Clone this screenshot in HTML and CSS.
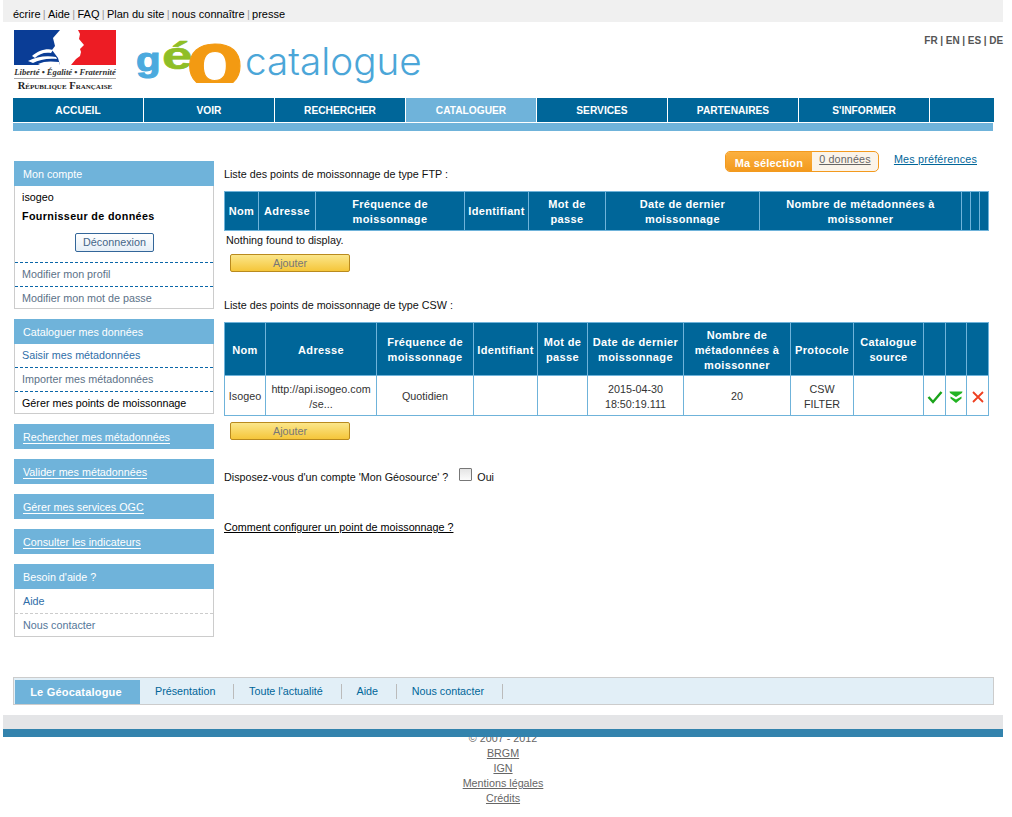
FILE: index.html
```html
<!DOCTYPE html>
<html lang="fr">
<head>
<meta charset="utf-8">
<title>Géocatalogue</title>
<link rel="stylesheet" href="styles.css">
</head>
<body>
<div class="page">
  <div class="util"><a>écrire</a><i>|</i><a>Aide</a><i>|</i><a>FAQ</a><i>|</i><a>Plan du site</a><i>|</i><a>nous connaître</a><i>|</i><a>presse</a></div>
  <header class="head">
    <div class="rf">
      <svg class="rf-flag" viewBox="0 0 102 35" width="102" height="35">
        <rect width="102" height="35" fill="#fff"/>
        <path d="M0 0H46L39 8 41 16 38 20 44 28 46 35H0Z" fill="#0a3d96"/>
        <path d="M64 0H102V35H57L62 29 66 26 67 22 66 19 70 15 65 9 66 4Z" fill="#ed1c24"/>
        <path d="M18 26C24 21 32 18 39 20L37 23C30 22 25 24 21 28ZM14 31C22 27 32 25 42 27L43 29C33 28 25 30 19 33ZM24 34C30 31 37 31 45 32L46 35H26Z" fill="#fff"/>
      </svg>
      <div class="rf-motto">Liberté • Égalité • Fraternité</div>
      <div class="rf-name">République Française</div>
    </div>
    <div class="brand"><span class="b-g">g</span><span class="b-e">é</span><span class="b-o"><span class="b-o-t">o</span></span><span class="b-c">catalogue</span></div>
    <div class="langs">FR | EN | ES | DE</div>
  </header>
  <nav class="nav">
    <a>ACCUEIL</a><a>VOIR</a><a>RECHERCHER</a><a class="on">CATALOGUER</a><a>SERVICES</a><a>PARTENAIRES</a><a>S'INFORMER</a><span class="nav-end"></span>
  </nav>
  <div class="strip"></div>
  <div class="layout">
    <aside class="side">
      <section class="box">
        <h3>Mon compte</h3>
        <div class="acct">
          <div class="user">isogeo</div>
          <div class="role">Fournisseur de données</div>
          <div class="logout"><button>Déconnexion</button></div>
        </div>
        <a class="row grey dash">Modifier mon profil</a>
        <a class="row grey dash">Modifier mon mot de passe</a>
      </section>
      <section class="box">
        <h3>Cataloguer mes données</h3>
        <a class="row blue">Saisir mes métadonnées</a>
        <a class="row grey dash">Importer mes métadonnées</a>
        <a class="row black dash">Gérer mes points de moissonnage</a>
      </section>
      <a class="solo"><span>Rechercher mes métadonnées</span></a>
      <a class="solo"><span>Valider mes métadonnées</span></a>
      <a class="solo"><span>Gérer mes services OGC</span></a>
      <a class="solo"><span>Consulter les indicateurs</span></a>
      <section class="box last">
        <h3>Besoin d'aide ?</h3>
        <a class="row blue">Aide</a>
        <a class="row grey2 dot">Nous contacter</a>
      </section>
    </aside>
    <main class="main">
      <div class="sel">
        <div class="sel-box"><span class="sel-l">Ma sélection</span><a class="sel-r">0 données</a></div>
        <a class="prefs">Mes préférences</a>
      </div>
      <p class="lead">Liste des points de moissonnage de type FTP :</p>
      <table class="grid ftp">
        <colgroup><col class="f1"><col class="f2"><col class="f3"><col class="f4"><col class="f5"><col class="f6"><col class="f7"><col class="f8"><col class="f8"><col class="f9"></colgroup>
        <thead><tr><th>Nom</th><th>Adresse</th><th>Fréquence de moissonnage</th><th>Identifiant</th><th>Mot de<br>passe</th><th>Date de dernier moissonnage</th><th>Nombre de métadonnées à moissonner</th><th></th><th></th><th></th></tr></thead>
      </table>
      <p class="none">Nothing found to display.</p>
      <button class="add">Ajouter</button>
      <p class="lead csw">Liste des points de moissonnage de type CSW :</p>
      <table class="grid cswt">
        <colgroup><col class="c1"><col class="c2"><col class="c3"><col class="c4"><col class="c5"><col class="c6"><col class="c7"><col class="c8"><col class="c9"><col class="c10"><col class="c11"><col class="c12"></colgroup>
        <thead><tr><th>Nom</th><th>Adresse</th><th>Fréquence de moissonnage</th><th>Identifiant</th><th>Mot de passe</th><th>Date de dernier moissonnage</th><th>Nombre de métadonnées à moissonner</th><th>Protocole</th><th>Catalogue source</th><th></th><th></th><th></th></tr></thead>
        <tbody><tr>
          <td>Isogeo</td><td>http://api.isogeo.com<br>/se...</td><td>Quotidien</td><td></td><td></td><td>2015-04-30<br>18:50:19.111</td><td>20</td><td>CSW<br>FILTER</td><td></td>
          <td><svg class="ico" viewBox="0 0 16 14" width="16" height="14"><path d="M1.500 7L6 12 14.500 2" fill="none" stroke="#1aa31a" stroke-width="2.400"/></svg></td>
          <td><svg class="ico" viewBox="0 0 14 14" width="14" height="14"><path d="M0.500 1.500H13.500L13 3 7 7 1 3ZM1.500 6.500L7 9.500 12.500 6.500V8.500L7 13 1.500 8.500Z" fill="#22b322"/></svg></td>
          <td><svg class="ico" viewBox="0 0 14 14" width="14" height="14"><path d="M2 2L12 12M12 2L2 12" fill="none" stroke="#ee3f20" stroke-width="1.800"/></svg></td>
        </tr></tbody>
      </table>
      <button class="add add2">Ajouter</button>
      <div class="geos"><span>Disposez-vous d'un compte 'Mon Géosource' ?</span><input type="checkbox" class="chk"><span>Oui</span></div>
      <a class="how">Comment configurer un point de moissonnage ?</a>
    </main>
  </div>
  <div class="subnav">
    <strong>Le Géocatalogue</strong><a>Présentation</a><a>Toute l'actualité</a><a>Aide</a><a>Nous contacter</a>
  </div>
  <div class="foot-grey"></div>
  <div class="foot-blue"></div>
  <footer class="foot">
    <div>© 2007 - 2012</div>
    <a>BRGM</a><a>IGN</a><a>Mentions légales</a><a>Crédits</a>
  </footer>
</div>
</body>
</html>
```
FILE: styles.css
```css
* { box-sizing: border-box; }
html, body { margin: 0; padding: 0; background: #fff; }
body { font: 10.75px/15px "Liberation Sans", Arial, sans-serif; color: #111; }
h3, p { margin: 0; font-weight: normal; }
.page { width: 1000px; margin-left: 3px; }

.util { height: 22px; padding: 7px 0 0 10px; background: #f0f0f0; font-size: 11px; line-height: 15px; color: #000; }
.util i { font-style: normal; color: #999; margin: 0 2.3px; }

.head { height: 76px; position: relative; display: flex; padding-left: 11px; }
.rf { width: 102px; padding-top: 8px; }
.rf-flag { display: block; }
.rf-motto { margin-top: 2px; font: italic bold 8.6px/11px "Liberation Serif", serif; white-space: nowrap; color: #333; text-align: center; }
.rf-name { margin-top: 0; padding-top: 1px; border-top: 1px solid #aaa; font: bold 10.5px/12px "Liberation Serif", serif; font-variant: small-caps; white-space: nowrap; color: #222; text-align: center; }
.brand { position: relative; flex: 1; }
.b-g, .b-e, .b-o, .b-c { position: absolute; font-family: "Liberation Sans", sans-serif; font-weight: bold; }
.b-g { left: 20px; top: 18px; font-size: 33px; line-height: 40px; color: #4baade; -webkit-text-stroke: 1px #4baade; transform: scaleX(1.22); transform-origin: left; }
.b-e { left: 46px; top: 10px; font-size: 38px; line-height: 48px; color: #8fbe26; -webkit-text-stroke: .6px #8fbe26; transform: scaleX(1.45); transform-origin: left; }
.b-o { left: 70px; top: 10px; width: 58px; height: 51px; overflow: hidden; }
.b-o-t { display: block; font-size: 80px; line-height: 80px; margin-top: -12px; color: #f39a12; -webkit-text-stroke: 1px #f39a12; transform: scaleX(1.18); transform-origin: left; }
.b-c { left: 129px; top: 11px; font-family: Inter, sans-serif; font-weight: 300; font-size: 38.7px; line-height: 56px; color: #4ba6d8; }
.langs { position: absolute; right: 0; top: 12px; font-size: 10px; font-weight: bold; color: #555; line-height: 14px; letter-spacing: -.05px; }

.nav { margin-left: 10px; width: 981px; height: 24px; display: flex; background: #006699; }
.nav a { width: 131px; border-right: 1px solid #fff; color: #fff; font-size: 10.2px; font-weight: bold; line-height: 25px; text-align: center; }
.nav a.on { background: #6fb3da; }
.nav-end { flex: 1; }
.strip { margin: 1px 0 0 10px; width: 980px; height: 8px; background: #6fb3da; }

.layout { display: flex; padding: 20px 0 0 11px; }
.side { width: 200px; padding-top: 10px; flex: none; }
.box { border: 1px solid #ccc; border-top: 0; margin-bottom: 10px; background: #fff; }
.box.last { margin-bottom: 0; }
.box h3 { margin: 0 -1px; height: 25px; padding-left: 9px; background: #6fb3da; color: #fff; font-size: 10.75px; line-height: 26px; }
.acct { height: 76px; padding: 3px 0 0 7px; color: #000; }
.user { line-height: 16px; }
.role { margin-top: 3px; font-weight: bold; line-height: 16px; letter-spacing: .35px; }
.logout { margin: 9px 0 0 53px; }
.logout button { display: block; width: 79px; height: 19px; padding: 0; border: 1px solid #336699; border-radius: 2px; background: linear-gradient(#ffffff, #e6eff7); color: #446688; font: 10.75px/15px "Liberation Sans", sans-serif; }
.row { display: block; height: 24px; padding-left: 7px; line-height: 23px; }
.row:last-child { height: 22px; }
.box h3 + .row { height: 23px; }
.last h3 + .row { height: 24px; line-height: 25px; }
.last .row:last-child { height: 23px; }
.last .row { padding-left: 8px; }
.row.dash { border-top: 1px dashed #0a66a8; }
.row.dot { border-top: 1px dashed #ccc; }
.grey { color: #5c7288; }
.grey2 { color: #557799; }
.blue { color: #2f6ea8; }
.black { color: #000; }
.solo { display: block; height: 25px; margin-bottom: 10px; padding-left: 9px; background: #6fb3da; color: #fff; line-height: 26px; }
.solo span { border-bottom: 1px solid #fff; }

.main { width: 765px; margin-left: 10px; flex: none; }
.sel { height: 15px; display: flex; justify-content: flex-end; align-items: flex-start; padding-right: 12px; }
.sel-box { width: 154px; height: 21px; display: flex; border: 1px solid #f39a1e; border-radius: 5px; overflow: hidden; background: #fbf4ea; flex: none; }
.sel-l { width: 86px; background: linear-gradient(#fbb040, #f39a1e); color: #fff; font-size: 11px; font-weight: bold; text-align: center; line-height: 22px; letter-spacing: .2px; }
.sel-r { flex: 1; text-align: center; color: #666; line-height: 14px; text-decoration: underline; letter-spacing: .15px; }
.prefs { margin-left: 15px; color: #006699; line-height: 16px; text-decoration: underline; letter-spacing: .2px; }
.lead { padding-top: 1px; height: 25px; line-height: 15px; }
.grid { border-collapse: collapse; table-layout: fixed; width: 764px; }
.grid th, .grid td { border: 1px solid #6fb3da; text-align: center; padding: 1px 1px 0; }
.grid th { background: #006699; color: #fff; font-size: 11px; font-weight: bold; line-height: 15px; letter-spacing: .35px; height: 39px; }
.cswt th { height: 53px; padding-top: 2px; }
.grid td { height: 40px; color: #333; line-height: 15px; padding-top: 2px; }
.ico { display: block; margin: 0 auto; }
.f1 { width: 34px; } .f2 { width: 57px; } .f3 { width: 149px; } .f4 { width: 64px; } .f5 { width: 77px; } .f6 { width: 154px; } .f7 { width: 202px; } .f8 { width: 9px; } .f9 { width: 9px; }
.c1 { width: 41px; } .c2 { width: 111px; } .c3 { width: 97px; } .c4 { width: 64px; } .c5 { width: 50px; } .c6 { width: 96px; } .c7 { width: 107px; } .c8 { width: 63px; } .c9 { width: 70px; } .c10 { width: 22px; } .c11 { width: 21px; } .c12 { width: 22px; }
.none { padding-left: 2px; height: 23px; line-height: 18px; }
.add { display: block; width: 120px; height: 18px; margin-left: 6px; padding: 0; border: 1px solid #b98a1e; border-radius: 2px; background: linear-gradient(#fbe68a, #f5c63a); color: #777; font: 10.75px/15px "Liberation Sans", sans-serif; }
.add2 { margin-top: 6px; }
.lead.csw { margin-top: 25px; height: 25px; }
.geos { display: flex; align-items: center; margin-top: 30px; height: 15px; }
.chk { appearance: none; width: 13px; height: 13px; margin: -6px 5px 0 11px; border: 1px solid #777; border-radius: 1px; background: linear-gradient(#e4e4e4, #fbfbfb); }
.how { display: block; margin-top: 35px; color: #000; text-decoration: underline; }

.subnav { margin: 40px 0 0 10px; width: 981px; height: 28px; display: flex; align-items: center; border: 1px solid #ccc; padding: 2px 0 0 1px; background: #e2eff7; }
.subnav strong { width: 125px; height: 24px; align-self: flex-start; padding-right: 3px; background: #6fb3da; color: #fff; text-align: center; line-height: 24px; letter-spacing: .2px; font-size: 11px; }
.subnav a { padding: 0 17.7px 0 15px; height: 15px; margin-top: -2px; border-right: 1px solid #bbb; color: #006699; line-height: 15px; }
.foot-grey { margin-top: 10px; height: 14px; background: #e4e5e7; }
.foot-blue { position: relative; height: 8px; background: #3383ad; z-index: 1; }
.foot { margin-top: -6px; text-align: center; color: #666; line-height: 15px; }
.foot a { display: block; text-decoration: underline; }
```
